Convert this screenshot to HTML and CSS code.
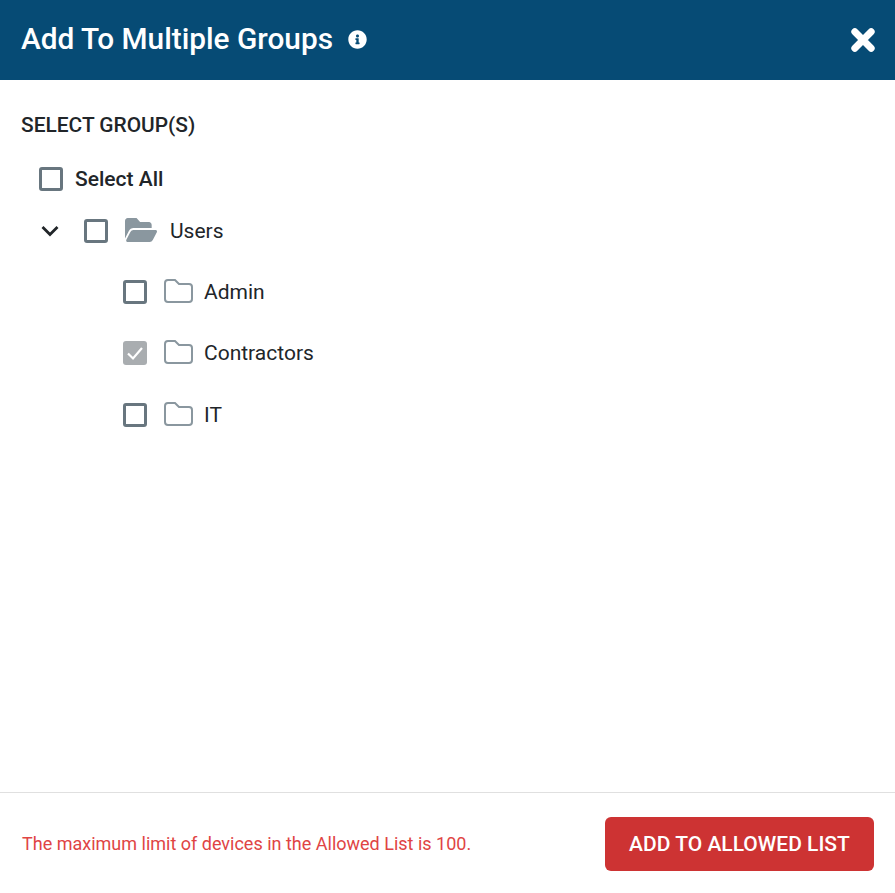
FILE: index.html
```
<!DOCTYPE html>
<html lang="en">
<head>
<meta charset="utf-8">
<title>Add To Multiple Groups</title>
<link rel="stylesheet" href="styles.css">
</head>
<body>
<div class="modal">
  <header class="head">
    <div class="title-wrap">
      <h1 class="title">Add To Multiple Groups</h1>
      <svg class="info" viewBox="0 0 512 512"><path fill="#fff" d="M256 8C119 8 8 119 8 256s111 248 248 248 248-111 248-248S393 8 256 8zm0 110c23 0 42 19 42 42s-19 42-42 42-42-19-42-42 19-42 42-42zm56 254c0 7-5 12-12 12h-88c-7 0-12-5-12-12v-24c0-7 5-12 12-12h12v-64h-12c-7 0-12-5-12-12v-24c0-7 5-12 12-12h64c7 0 12 5 12 12v100h12c7 0 12 5 12 12v24z"/></svg>
    </div>
    <svg class="close" viewBox="0 0 24 24"><path d="M5 5l14 14M19 5L5 19" stroke="#fff" stroke-width="6" stroke-linecap="round" fill="none"/></svg>
  </header>
  <main class="body">
    <div class="section">SELECT GROUP(S)</div>
    <div class="row row-all"><span class="box"></span><span class="all-label">Select All</span></div>
    <div class="row row-users">
      <svg class="chev" viewBox="0 0 20 14"><path d="M2.500 3l7.500 7.500L17.500 3" stroke="#212529" stroke-width="2.800" fill="none"/></svg>
      <span class="box"></span>
      <svg class="folder-open" viewBox="0 64 576 384" preserveAspectRatio="none"><path fill="#8a979f" d="M572.7 292.100l-72.400 124.100A64 64 0 0 1 445 448H45c-18.500 0-30-20.100-20.700-36.100l72.400-124.100A64 64 0 0 1 152 256h400c18.500 0 30 20.100 20.700 36.100zM152 224h328v-48c0-26.500-21.500-48-48-48H272l-64-64H48C21.500 64 0 85.500 0 112v278l69.100-118.400C86.200 242.300 118 224 152 224z"/></svg>
      <span class="label">Users</span>
    </div>
    <div class="row row-child">
      <span class="box"></span>
      <svg class="folder" viewBox="0 0 30 24"><path d="M1 4a3 3 0 0 1 3-3h7l4 4h10a3 3 0 0 1 3 3v12a3 3 0 0 1-3 3H4a3 3 0 0 1-3-3z" fill="none" stroke="#8a979f" stroke-width="2"/></svg>
      <span class="label">Admin</span>
    </div>
    <div class="row row-child">
      <span class="box box-checked"><svg viewBox="0 0 24 24"><path d="M5 12.500l5 5L19 7" stroke="#fff" stroke-width="2.200" fill="none"/></svg></span>
      <svg class="folder" viewBox="0 0 30 24"><path d="M1 4a3 3 0 0 1 3-3h7l4 4h10a3 3 0 0 1 3 3v12a3 3 0 0 1-3 3H4a3 3 0 0 1-3-3z" fill="none" stroke="#8a979f" stroke-width="2"/></svg>
      <span class="label">Contractors</span>
    </div>
    <div class="row row-child">
      <span class="box"></span>
      <svg class="folder" viewBox="0 0 30 24"><path d="M1 4a3 3 0 0 1 3-3h7l4 4h10a3 3 0 0 1 3 3v12a3 3 0 0 1-3 3H4a3 3 0 0 1-3-3z" fill="none" stroke="#8a979f" stroke-width="2"/></svg>
      <span class="label">IT</span>
    </div>
  </main>
  <footer class="foot">
    <p class="limit">The maximum limit of devices in the Allowed List is 100.</p>
    <button class="action" type="button">ADD TO ALLOWED LIST</button>
  </footer>
</div>
</body>
</html>
```
FILE: styles.css
```
* { box-sizing: border-box; }
html, body { margin: 0; height: 100%; background: #fff; }
body { font-family: Roboto, "Liberation Sans", sans-serif; color: #212529; }
.modal { height: 893px; display: flex; flex-direction: column; }
.head { height: 80px; flex: none; background: #064b75; display: flex; align-items: center; justify-content: space-between; padding: 0 18px 0 21px; }
.title-wrap { display: flex; align-items: center; gap: 15px; }
.title { margin: 0 0 2px; font-size: 29.800px; font-weight: 500; color: #fff; line-height: 36px; }
.info { width: 19px; height: 19px; margin-bottom: 2px; }
.close { width: 28px; height: 28px; }
.body { flex: 1; padding: 33px 21px 0; }
.section { font-size: 20.900px; font-weight: 500; line-height: 24px; height: 24px; }
.row { display: flex; align-items: center; }
.box { width: 24px; height: 24px; border: 3px solid #68767f; border-radius: 3px; flex: none; background: #fff; }
.box-checked { background: #a9adb0; border: 0; }
.box-checked svg { display: block; width: 24px; height: 24px; }
.row-all { margin: 30px 0 0 18px; height: 24px; gap: 12px; }
.all-label { font-size: 21px; font-weight: 500; }
.row-users { margin: 28px 0 0 19px; height: 24px; }
.chev { width: 20px; height: 14px; margin-right: 24px; }
.row-users .box { margin-right: 17px; }
.folder-open { width: 32px; height: 24px; margin-right: 13px; margin-bottom: 2px; }
.label { font-size: 21px; line-height: 24px; }
.row-child { margin: 37.500px 0 0 102px; height: 24px; }
.row-users + .row-child { margin-top: 36.500px; }
.row-child .box { margin-right: 17px; }
.folder { width: 30px; height: 24px; margin-right: 10px; margin-bottom: 2px; }
.foot { height: 101px; flex: none; border-top: 1px solid #e0e0e0; display: flex; align-items: center; justify-content: space-between; padding: 1px 21px 0 22px; }
.limit { margin: 0; font-size: 18px; color: #e04444; }
.action { width: 269px; height: 54px; background: #cd3333; color: #fff; border: 0; border-radius: 6px; font-family: inherit; font-size: 21px; font-weight: 500; }
```
